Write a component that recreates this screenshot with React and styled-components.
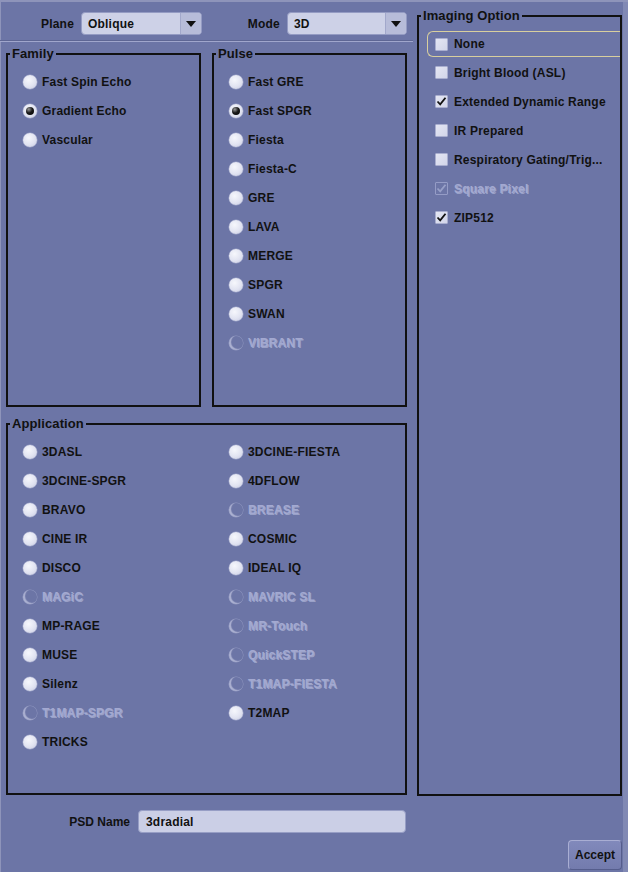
import styled, { createGlobalStyle, css } from 'styled-components';

const GlobalStyle = createGlobalStyle`
  html, body {
    margin: 0;
    padding: 0;
    background: #6c75a6;
  }
  * {
    box-sizing: border-box;
  }
`;

const families = [
  { label: 'Fast Spin Echo' },
  { label: 'Gradient Echo', checked: true },
  { label: 'Vascular' },
];

const pulses = [
  { label: 'Fast GRE' },
  { label: 'Fast SPGR', checked: true },
  { label: 'Fiesta' },
  { label: 'Fiesta-C' },
  { label: 'GRE' },
  { label: 'LAVA' },
  { label: 'MERGE' },
  { label: 'SPGR' },
  { label: 'SWAN' },
  { label: 'VIBRANT', disabled: true },
];

const applications = [
  { label: '3DASL' },
  { label: '3DCINE-FIESTA' },
  { label: '3DCINE-SPGR' },
  { label: '4DFLOW' },
  { label: 'BRAVO' },
  { label: 'BREASE', disabled: true },
  { label: 'CINE IR' },
  { label: 'COSMIC' },
  { label: 'DISCO' },
  { label: 'IDEAL IQ' },
  { label: 'MAGiC', disabled: true },
  { label: 'MAVRIC SL', disabled: true },
  { label: 'MP-RAGE' },
  { label: 'MR-Touch', disabled: true },
  { label: 'MUSE' },
  { label: 'QuickSTEP', disabled: true },
  { label: 'Silenz' },
  { label: 'T1MAP-FIESTA', disabled: true },
  { label: 'T1MAP-SPGR', disabled: true },
  { label: 'T2MAP' },
  { label: 'TRICKS' },
];

const options = [
  { label: 'None', focused: true },
  { label: 'Bright Blood (ASL)' },
  { label: 'Extended Dynamic Range', checked: true },
  { label: 'IR Prepared' },
  { label: 'Respiratory Gating/Trig...' },
  { label: 'Square Pixel', checked: true, disabled: true },
  { label: 'ZIP512', checked: true },
];

const font = css`
  font-family: 'Liberation Sans', Arial, sans-serif;
  font-weight: bold;
  font-size: 12px;
  letter-spacing: 0.2px;
`;

const Page = styled.div`
  width: 628px;
  height: 872px;
  background: #6c75a6;
  box-shadow: inset 1px 2px 0 #8e94ba, inset -5px 0 0 #8189b4;
  color: #111;
  ${font};
  display: flex;
  flex-direction: column;
  overflow: hidden;
`;

const Main = styled.div`
  display: grid;
  grid-template-columns: 413px 205px;
  column-gap: 4px;
`;

const LeftColumn = styled.div`
  display: flex;
  flex-direction: column;
`;

const Toolbar = styled.div`
  margin-top: 12px;
  display: grid;
  grid-template-columns: 81px 121px 85px 120px;
  height: 23px;
  align-items: center;
`;

const FieldLabel = styled.span`
  justify-self: end;
  padding-right: 7px;
`;

const Select = styled.div`
  height: 23px;
  display: flex;
  align-items: stretch;
  background: #cdd1e7;
  border: 1px solid #949bc3;
  border-radius: 4px;
  overflow: hidden;
`;

const SelectValue = styled.span`
  flex: 1;
  display: flex;
  align-items: center;
  padding-left: 6px;
`;

const SelectArrow = styled.span`
  width: 21px;
  display: flex;
  align-items: center;
  justify-content: center;
  background: #b7bcd9;
  border-left: 1px solid #a2a8cb;

  &::after {
    content: '';
    border-left: 5px solid transparent;
    border-right: 5px solid transparent;
    border-top: 6px solid #111;
  }
`;

const Separator = styled.div`
  margin-top: 5px;
  height: 2px;
  border-top: 1px solid #5e6694;
  border-bottom: 1px solid #a0a6cc;
`;

const TopBoxes = styled.div`
  margin: 4px 0 0 6px;
  display: grid;
  grid-template-columns: 195px 195px;
  column-gap: 11px;
  height: 361px;
`;

const Group = styled.fieldset`
  margin: 0;
  padding: 0;
  min-width: 0;
  border: 2px solid #111;
  height: ${(p) => p.$height || 'auto'};
`;

const Legend = styled.legend`
  margin-left: 2px;
  padding: 0 2px;
  font-size: 13px;
  line-height: 16px;
  letter-spacing: 0.1px;
`;

const List = styled.div`
  padding: 5px 0 0 15px;
  display: ${(p) => (p.$columns ? 'grid' : 'flex')};
  flex-direction: column;
  grid-template-columns: 206px 1fr;
`;

const Row = styled.div`
  height: 29px;
  display: flex;
  align-items: center;
  gap: 5px;
  white-space: nowrap;
`;

const Label = styled.span`
  ${(p) =>
    p.$disabled &&
    css`
      color: #a3a9d1;
      text-shadow: 1px 1px 0 rgba(215, 219, 242, 0.45);
    `}
`;

const RadioDot = styled.span`
  width: 14px;
  height: 14px;
  flex: none;
  border-radius: 50%;
  display: flex;
  align-items: center;
  justify-content: center;
  background: radial-gradient(circle at 40% 35%, #f6f7fc 0%, #e1e3f1 55%, #c3c7df 100%);
  box-shadow: 0 0 0 0.5px #a2a8cc;

  ${(p) =>
    p.$checked &&
    css`
      &::after {
        content: '';
        width: 8px;
        height: 8px;
        border-radius: 50%;
        background: radial-gradient(circle at 35% 30%, #9a9a9a 0%, #1a1a1a 45%, #000 100%);
      }
    `}

  ${(p) =>
    p.$disabled &&
    css`
      background: transparent;
      box-shadow: inset 2px -1px 1px rgba(225, 228, 246, 0.55), 0 0 0 0.5px rgba(180, 185, 220, 0.5);
    `}
`;

const Application = styled.div`
  margin: 9px 0 0 6px;
  width: 401px;
`;

const RightColumn = styled.div`
  padding-top: 8px;
`;

const OptionList = styled.div`
  padding-top: 5px;
  padding-left: 8px;
  display: flex;
  flex-direction: column;
`;

const OptionRow = styled.div`
  height: 29px;
  display: flex;
  align-items: center;
  gap: 6px;
  padding-left: 8px;
  white-space: nowrap;

  ${(p) =>
    p.$focused &&
    css`
      height: 26px;
      margin: 2px 0 1px;
      padding-left: 7px;
      border: 1px solid #d8cf9e;
      border-right: none;
      border-radius: 6px 0 0 6px;
    `}
`;

const CheckBox = styled.span`
  width: 13px;
  height: 13px;
  flex: none;
  display: flex;
  align-items: center;
  justify-content: center;
  background: linear-gradient(135deg, #e4e6f3 0%, #d2d5e9 100%);
  border: 1px solid #a9aecf;
  border-radius: 1px;

  ${(p) =>
    p.$disabled &&
    css`
      background: transparent;
      border-color: #959cc6;
    `}
`;

const Footer = styled.div`
  display: flex;
  flex-direction: column;
`;

const PsdRow = styled.div`
  margin-top: 14px;
  display: grid;
  grid-template-columns: 130px 268px;
  column-gap: 8px;
  align-items: center;
`;

const PsdLabel = styled.span`
  justify-self: end;
  letter-spacing: 0;
`;

const TextField = styled.div`
  height: 23px;
  display: flex;
  align-items: center;
  padding-left: 7px;
  background: #cbcfe6;
  border: 1px solid #979ec5;
  border-radius: 4px;
`;

const ButtonRow = styled.div`
  margin-top: 7px;
  padding-right: 6px;
  display: flex;
  justify-content: flex-end;
`;

const Button = styled.button`
  ${font};
  letter-spacing: 0;
  width: 54px;
  height: 30px;
  padding: 0;
  color: #111;
  background: linear-gradient(180deg, #8189bb 0%, #737bad 100%);
  border: 1px solid #a9aed3;
  border-right-color: #555d8c;
  border-bottom-color: #555d8c;
  border-radius: 4px;
`;

function Check({ disabled }) {
  return (
    <svg width="11" height="11" viewBox="0 0 11 11">
      <path
        d="M1.5 5.5 L4.2 8.3 L9.5 1.8"
        fill="none"
        stroke={disabled ? '#98a0c8' : '#111'}
        strokeWidth="1.8"
      />
    </svg>
  );
}

function Radio({ label, checked, disabled }) {
  return (
    <Row>
      <RadioDot $checked={checked} $disabled={disabled} />
      <Label $disabled={disabled}>{label}</Label>
    </Row>
  );
}

function Dropdown({ value }) {
  return (
    <Select>
      <SelectValue>{value}</SelectValue>
      <SelectArrow />
    </Select>
  );
}

export default function App() {
  return (
    <>
      <GlobalStyle />
      <Page>
        <Main>
          <LeftColumn>
            <Toolbar>
              <FieldLabel>Plane</FieldLabel>
              <Dropdown value="Oblique" />
              <FieldLabel>Mode</FieldLabel>
              <Dropdown value="3D" />
            </Toolbar>
            <Separator />
            <TopBoxes>
              <Group $height="361px">
                <Legend>Family</Legend>
                <List>
                  {families.map((f) => (
                    <Radio key={f.label} {...f} />
                  ))}
                </List>
              </Group>
              <Group $height="361px">
                <Legend>Pulse</Legend>
                <List>
                  {pulses.map((p) => (
                    <Radio key={p.label} {...p} />
                  ))}
                </List>
              </Group>
            </TopBoxes>
            <Application>
              <Group $height="379px">
                <Legend>Application</Legend>
                <List $columns>
                  {applications.map((a) => (
                    <Radio key={a.label} {...a} />
                  ))}
                </List>
              </Group>
            </Application>
          </LeftColumn>

          <RightColumn>
            <Group $height="788px">
              <Legend>Imaging Option</Legend>
              <OptionList>
                {options.map((o) => (
                  <OptionRow key={o.label} $focused={o.focused}>
                    <CheckBox $disabled={o.disabled}>
                      {o.checked && <Check disabled={o.disabled} />}
                    </CheckBox>
                    <Label $disabled={o.disabled}>{o.label}</Label>
                  </OptionRow>
                ))}
              </OptionList>
            </Group>
          </RightColumn>
        </Main>

        <Footer>
          <PsdRow>
            <PsdLabel>PSD Name</PsdLabel>
            <TextField>3dradial</TextField>
          </PsdRow>
          <ButtonRow>
            <Button>Accept</Button>
          </ButtonRow>
        </Footer>
      </Page>
    </>
  );
}
